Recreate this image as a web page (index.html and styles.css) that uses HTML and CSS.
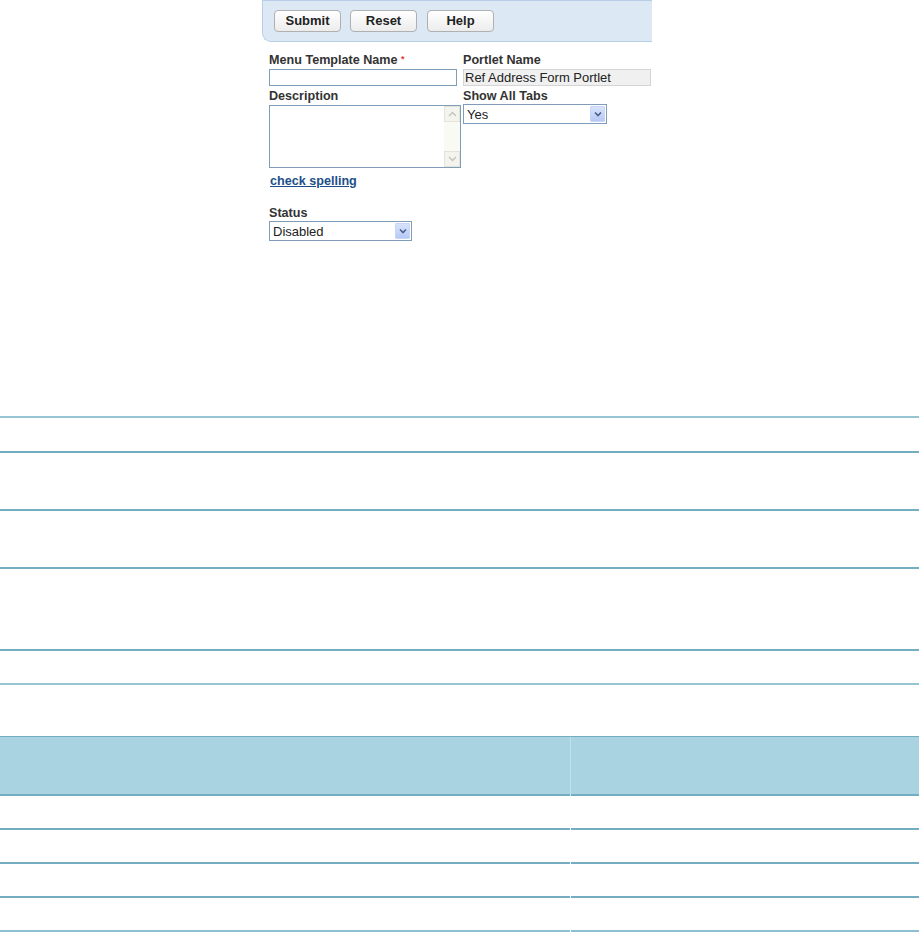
FILE: index.html
```html
<!DOCTYPE html>
<html lang="en">
<head>
    <meta charset="UTF-8">
    <title>Menu Template</title>
    <link rel="stylesheet" href="styles.css">
</head>
<body>

<div class="form-panel">
    <!-- Button bar -->
    <div class="toolbar">
        <button class="btn">Submit</button>
        <button class="btn">Reset</button>
        <button class="btn">Help</button>
    </div>

    <!-- Fields -->
    <div class="fields">
        <div class="field-grid">
            <label class="field-label">Menu Template Name <span class="req">*</span></label>
            <label class="field-label">Portlet Name</label>

            <input class="text-input" type="text">
            <input class="text-input readonly" type="text" value="Ref Address Form Portlet" readonly>

            <label class="field-label gap-top">Description</label>
            <label class="field-label gap-top">Show All Tabs</label>

            <div class="textarea">
                <div class="textarea-body"></div>
                <div class="scrollbar">
                    <span class="scroll-btn">
                        <svg width="9" height="6" viewBox="0 0 9 6"><path d="M1 5 L4.5 1.5 L8 5" fill="none" stroke="#c2c2ba" stroke-width="1.3"/></svg>
                    </span>
                    <span class="scroll-btn">
                        <svg width="9" height="6" viewBox="0 0 9 6"><path d="M1 1 L4.5 4.5 L8 1" fill="none" stroke="#c2c2ba" stroke-width="1.3"/></svg>
                    </span>
                </div>
            </div>
            <div class="select select-tabs">
                <span class="select-text">Yes</span>
                <span class="select-btn">
                    <svg width="8" height="6" viewBox="0 0 8 6"><path d="M1 1.5 L4 4.5 L7 1.5" fill="none" stroke="#4d5f87" stroke-width="1.6"/></svg>
                </span>
            </div>
        </div>

        <a class="spell-link" href="#">check spelling</a>

        <label class="field-label status-label">Status</label>
        <div class="select select-status">
            <span class="select-text">Disabled</span>
            <span class="select-btn">
                <svg width="8" height="6" viewBox="0 0 8 6"><path d="M1 1.5 L4 4.5 L7 1.5" fill="none" stroke="#4d5f87" stroke-width="1.6"/></svg>
            </span>
        </div>
    </div>
</div>

<!-- Empty list rows -->
<div class="row-list">
    <div class="list-row first" style="height: 33px"></div>
    <div class="list-row" style="height: 56px"></div>
    <div class="list-row" style="height: 56px"></div>
    <div class="list-row" style="height: 80px"></div>
    <div class="list-row" style="height: 32px"></div>
</div>

<!-- Empty grid -->
<div class="data-grid">
    <div class="grid-head">
        <div class="grid-cell"></div>
        <div class="grid-cell"></div>
    </div>
    <div class="grid-row">
        <div class="grid-cell"></div>
        <div class="grid-cell"></div>
    </div>
    <div class="grid-row">
        <div class="grid-cell"></div>
        <div class="grid-cell"></div>
    </div>
    <div class="grid-row">
        <div class="grid-cell"></div>
        <div class="grid-cell"></div>
    </div>
    <div class="grid-row">
        <div class="grid-cell"></div>
        <div class="grid-cell"></div>
    </div>
</div>

</body>
</html>
```

FILE: styles.css
```css
body {
    margin: 0;
    font-family: "Liberation Sans", Arial, sans-serif;
    color: #333;
    background: #fff;
}

.form-panel {
    margin-left: 262px;
    width: 390px;
}

.toolbar {
    display: flex;
    gap: 9px;
    height: 40px;
    box-sizing: content-box;
    padding: 0 0 0 11px;
    align-items: center;
    background-color: #dde8f5;
    border: 1px solid #b8cde8;
    border-right: none;
    border-bottom-left-radius: 9px;
}

.btn {
    width: 67px;
    height: 22px;
    padding: 0;
    margin-top: -1px;
    font-family: inherit;
    font-size: 13px;
    font-weight: bold;
    color: #222;
    background: linear-gradient(#ffffff, #ececec);
    border: 1px solid #b0b0b0;
    border-radius: 4px;
}

.btn:last-child {
    margin-left: 1px;
}

.fields {
    padding: 11px 0 0 7px;
}

.field-grid {
    display: grid;
    grid-template-columns: 194px 188px;
    align-items: start;
}

.field-label {
    display: block;
    height: 14px;
    font-size: 12.6px;
    line-height: 14px;
    font-weight: bold;
    color: #333;
    margin-bottom: 2px;
}

.gap-top {
    margin-top: 3px;
}

.req {
    color: #e04040;
    font-size: 9px;
    line-height: 0;
    vertical-align: 2px;
}

.text-input {
    display: block;
    width: 188px;
    height: 17px;
    box-sizing: border-box;
    margin: 0;
    padding: 0 1px;
    font-family: inherit;
    font-size: 13px;
    color: #222;
    border: 1px solid #7f9db9;
    outline: none;
}

.text-input.readonly {
    background: #f0f0f0;
    border-color: #d4d4d4;
}

.textarea {
    display: flex;
    width: 192px;
    height: 63px;
    box-sizing: border-box;
    border: 1px solid #7f9db9;
    background: #fff;
}

.textarea-body {
    flex-grow: 1;
}

.scrollbar {
    width: 16px;
    display: flex;
    flex-direction: column;
    justify-content: space-between;
    background: #fafaf4;
}

.scroll-btn {
    height: 16px;
    display: flex;
    align-items: center;
    justify-content: center;
    background: #f4f4ee;
    border: 1px solid #e4e3da;
    box-sizing: border-box;
}

.select {
    display: flex;
    align-items: center;
    height: 20px;
    box-sizing: border-box;
    border: 1px solid #7f9db9;
    background: #fff;
    padding: 1px;
}

.select-tabs {
    width: 144px;
    margin-top: -1px;
}

.select-status {
    width: 143px;
}

.select-text {
    flex-grow: 1;
    font-size: 13px;
    color: #222;
    padding-left: 2px;
}

.select-btn {
    width: 15px;
    height: 16px;
    display: flex;
    align-items: center;
    justify-content: center;
    background: linear-gradient(#d8e3fb, #b6c8f6);
    border: 1px solid #c7d5f6;
    box-sizing: border-box;
    border-radius: 1px;
}

.spell-link {
    display: block;
    width: fit-content;
    margin: 6px 0 0 1px;
    font-size: 12.6px;
    line-height: 14px;
    font-weight: bold;
    color: #1b4f8a;
    text-decoration: underline;
}

.status-label {
    margin-top: 18px;
    margin-bottom: 1px;
}

.row-list {
    margin-top: 175px;
    width: 919px;
}

.list-row {
    border-bottom: 2px solid #74adc0;
}

.list-row.first {
    border-top: 2px solid #96c4d3;
}

.list-row:last-child {
    border-bottom-color: #96c4d3;
}

.data-grid {
    margin-top: 51px;
    width: 919px;
}

.grid-head,
.grid-row {
    display: grid;
    grid-template-columns: 570px 1fr;
    column-gap: 1px;
}

.grid-head {
    background: #c3e1ea;
    border-top: 1px solid #74adc0;
}

.grid-head .grid-cell {
    height: 57px;
    background: #a9d3e0;
    border-bottom: 2px solid #74adc0;
}

.grid-row .grid-cell {
    height: 32px;
    border-bottom: 2px solid #74adc0;
}

.grid-row:last-child .grid-cell {
    border-bottom-color: #8cbfd0;
}
```
